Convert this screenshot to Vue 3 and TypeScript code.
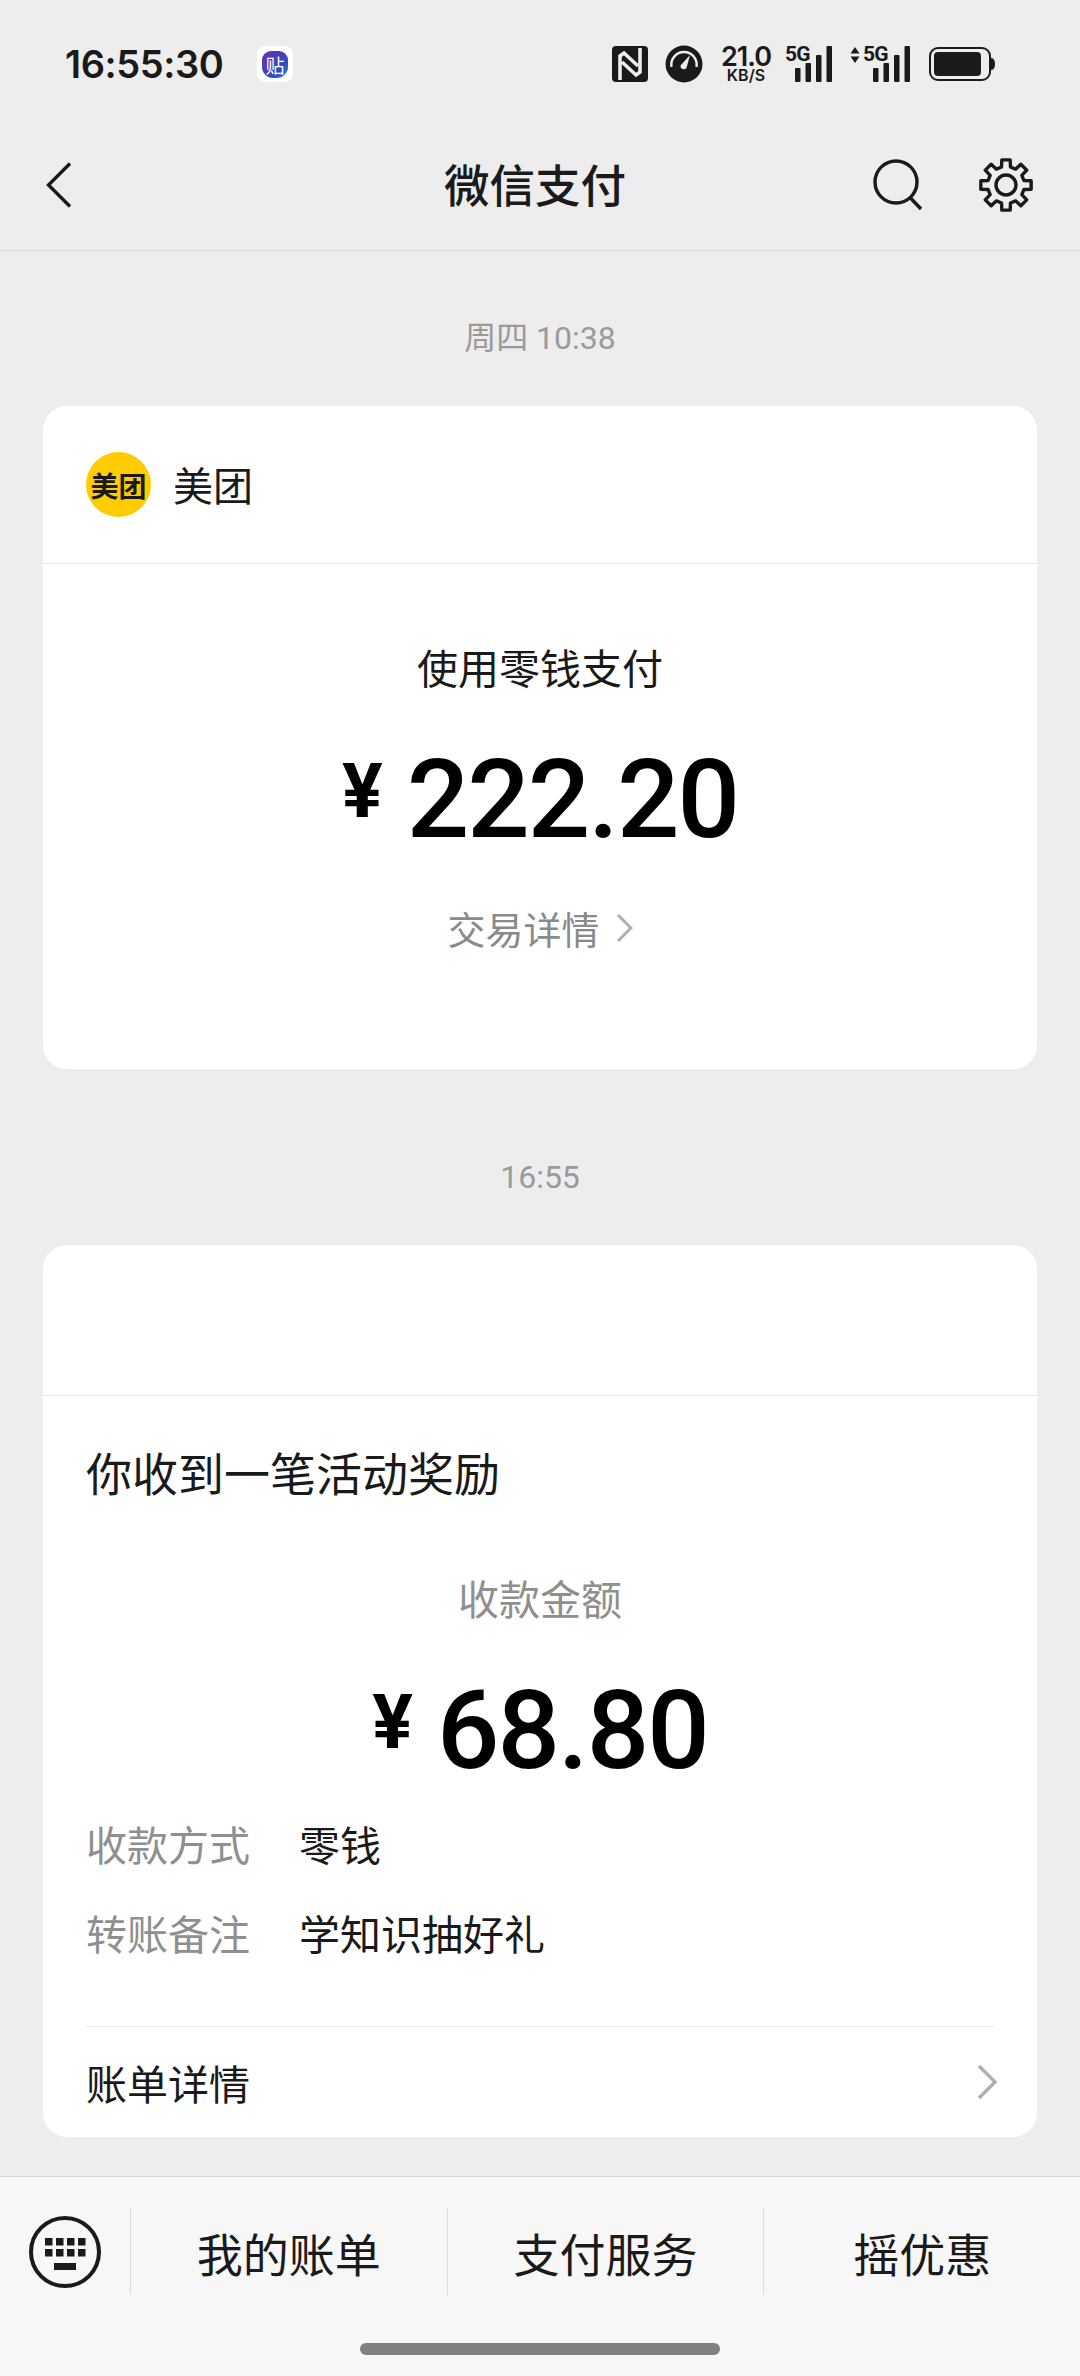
<script setup lang="ts">
// 8 tooth gear outline, in a 54x54 box
const gearPath = (() => {
  const pts: string[] = []
  const teeth = 8
  for (let i = 0; i < teeth; i++) {
    const a = (i / teeth) * Math.PI * 2 - Math.PI / 2
    const step = Math.PI / teeth
    const list: [number, number][] = [
      [a - step * 0.42, 25.5],
      [a + step * 0.42, 25.5],
      [a + step * 0.62, 18.5],
      [a + step * 1.38, 18.5],
    ]
    for (const [ang, r] of list) {
      pts.push(`${(27 + Math.cos(ang) * r).toFixed(2)} ${(27 + Math.sin(ang) * r).toFixed(2)}`)
    }
  }
  return 'M' + pts.join('L') + 'Z'
})()

const tabs = ['我的账单', '支付服务', '摇优惠']
const keyRows = [0, 1]
const keyCols = [0, 1, 2, 3]
const bars = [
  { x: 0, h: 14 },
  { x: 10.5, h: 19 },
  { x: 21, h: 27 },
  { x: 31.5, h: 36 },
]
</script>

<template>
  <div class="page">
    <div class="status">
      <span class="status__time">16:55:30</span>
      <div class="status__app"><span class="status__app-inner">贴</span></div>
      <div class="status__icons">
        <svg width="36" height="36" viewBox="0 0 36 36">
          <rect width="36" height="36" rx="4" fill="#1a1a1a" />
          <path d="M8 34V10l4-3 14 13M28 2v24l-4 3L10 16" fill="none" stroke="#ededed" stroke-width="3.600" />
        </svg>
        <svg class="status__gauge" width="38" height="38" viewBox="0 0 38 38">
          <circle cx="19" cy="19" r="18.5" fill="#1a1a1a" />
          <path d="M6.500 22A12.700 12.700 0 1 1 31.500 22" fill="none" stroke="#ededed" stroke-width="2.400" />
          <path d="M25 10l-3.500 13a3.400 3.400 0 0 1-6-2.600z" fill="#ededed" />
        </svg>
        <div class="status__speed">
          <span class="status__speed-num">21.0</span>
          <span class="status__speed-unit">KB/S</span>
        </div>
        <div class="status__signal">
          <span class="status__net">5G</span>
          <svg width="38" height="36" viewBox="0 0 38 36">
            <rect v-for="b in bars" :key="b.x" :x="b.x" :y="36 - b.h" width="5.500" :height="b.h" rx="1" fill="#1a1a1a" />
          </svg>
        </div>
        <div class="status__signal status__signal--data">
          <svg class="status__arrows" width="10" height="16" viewBox="0 0 10 16">
            <path d="M5 0l4.500 6.500h-9zM5 16L.5 9.500h9z" fill="#1a1a1a" />
          </svg>
          <span class="status__net">5G</span>
          <svg width="38" height="36" viewBox="0 0 38 36">
            <rect v-for="b in bars" :key="b.x" :x="b.x" :y="36 - b.h" width="5.500" :height="b.h" rx="1" fill="#1a1a1a" />
          </svg>
        </div>
        <svg width="66" height="34" viewBox="0 0 66 34">
          <rect x="1" y="1" width="60" height="32" rx="8" fill="none" stroke="#1a1a1a" stroke-width="2" />
          <rect x="5" y="5" width="47" height="24" rx="4" fill="#1a1a1a" />
          <path d="M62 11c3 0 4 3 4 6s-1 6-4 6z" fill="#1a1a1a" />
        </svg>
      </div>
    </div>

    <header class="nav">
      <svg class="nav__back" width="26" height="46" viewBox="0 0 26 46">
        <path d="M24 1.500 2.500 23 24 44.500" fill="none" stroke="#1a1a1a" stroke-width="3.400" />
      </svg>
      <h1 class="nav__title">微信支付</h1>
      <svg class="nav__search" width="50" height="52" viewBox="0 0 50 52">
        <circle cx="23" cy="23" r="21" fill="none" stroke="#1a1a1a" stroke-width="3.400" />
        <path d="M37 38.500 48 50" fill="none" stroke="#1a1a1a" stroke-width="3.400" />
      </svg>
      <svg class="nav__gear" width="54" height="54" viewBox="0 0 54 54">
        <path :d="gearPath" fill="none" stroke="#1a1a1a" stroke-width="3.400" stroke-linejoin="round" />
        <circle cx="27" cy="27" r="10" fill="none" stroke="#1a1a1a" stroke-width="3.400" />
      </svg>
    </header>

    <main class="feed">
      <p class="stamp stamp--first">周四 10:38</p>
      <section class="card">
        <div class="card__head">
          <div class="logo">美团</div>
          <span class="card__name">美团</span>
        </div>
        <div class="pay">
          <p class="pay__label">使用零钱支付</p>
          <div class="amount">
            <span class="amount__sign">¥</span>
            <span class="amount__num">222.20</span>
          </div>
          <div class="pay__link">
            <span>交易详情</span>
            <svg width="17" height="30" viewBox="0 0 17 30">
              <path d="M2 2l13 13L2 28" fill="none" stroke="#b0b0b0" stroke-width="3" />
            </svg>
          </div>
        </div>
      </section>

      <p class="stamp">16:55</p>
      <section class="card">
        <div class="card__head card__head--empty"></div>
        <div class="reward">
          <p class="reward__title">你收到一笔活动奖励</p>
          <p class="reward__label">收款金额</p>
          <div class="amount">
            <span class="amount__sign">¥</span>
            <span class="amount__num">68.80</span>
          </div>
          <div class="row row--first">
            <span class="row__key">收款方式</span>
            <span class="row__value">零钱</span>
          </div>
          <div class="row">
            <span class="row__key">转账备注</span>
            <span class="row__value">学知识抽好礼</span>
          </div>
          <div class="bill">
            <span>账单详情</span>
            <svg class="bill__arrow" width="20" height="36" viewBox="0 0 20 36">
              <path d="M2 2l16 16L2 34" fill="none" stroke="#b0b0b0" stroke-width="3.400" />
            </svg>
          </div>
        </div>
      </section>
    </main>

    <footer class="tabbar">
      <div class="tabbar__row">
        <div class="tabbar__key">
          <svg width="74" height="74" viewBox="0 0 74 74">
            <circle cx="37" cy="37" r="34" fill="none" stroke="#1a1a1a" stroke-width="4" />
            <template v-for="r in keyRows" :key="r">
              <rect v-for="c in keyCols" :key="c" :x="17 + c * 11" :y="23 + r * 11" width="7.500" height="7.500" fill="#1a1a1a" />
            </template>
            <rect x="26" y="48" width="22" height="7" fill="#1a1a1a" />
          </svg>
        </div>
        <div v-for="t in tabs" :key="t" class="tabbar__item">{{ t }}</div>
      </div>
      <div class="tabbar__home"></div>
    </footer>
  </div>
</template>

<style>
html,
body {
  margin: 0;
  background: #ededed;
}
</style>

<style scoped>
.page {
  display: flex;
  flex-direction: column;
  width: 1080px;
  height: 2376px;
  overflow: hidden;
  background: #ededed;
  color: #1a1a1a;
  font-family: "Noto Sans CJK SC", "Noto Sans", sans-serif;
}

p,
h1 {
  margin: 0;
}

.status {
  display: flex;
  align-items: center;
  height: 128px;
  margin-bottom: -8px;
  padding-left: 65px;
}

.status__time {
  width: 192px;
  color: #1a1a1a;
  font-family: Inter, Roboto, sans-serif;
  font-size: 38px;
  font-weight: 600;
  letter-spacing: -0.4px;
}

.status__app {
  display: flex;
  align-items: center;
  justify-content: center;
  width: 36px;
  height: 36px;
  border-radius: 8px;
  background: #fff;
}

.status__app-inner {
  display: flex;
  align-items: center;
  justify-content: center;
  width: 26px;
  height: 27px;
  border-radius: 9px 9px 11px 11px;
  background: linear-gradient(135deg, #6a2fb0, #2f4cc0 70%, #2a9ae0);
  color: #fff;
  font-size: 19px;
  line-height: 1;
}

.status__icons {
  display: flex;
  align-items: center;
  margin-left: 319px;
}

.status__gauge {
  margin-left: 17px;
}

.status__speed {
  display: flex;
  flex-direction: column;
  align-items: center;
  width: 52px;
  margin-left: 17px;
  font-family: Inter, Roboto, sans-serif;
  font-weight: 600;
}

.status__speed-num {
  height: 22px;
  font-size: 27px;
  line-height: 22px;
  letter-spacing: -1px;
}

.status__speed-unit {
  height: 15px;
  font-size: 16px;
  line-height: 15px;
}

.status__signal {
  display: flex;
  align-items: flex-start;
  justify-content: flex-end;
  position: relative;
  width: 48px;
  height: 36px;
  margin-left: 13px;
}

.status__signal--data {
  width: 61px;
  margin-left: 17px;
}

.status__net {
  position: absolute;
  top: -1px;
  left: 0;
  font-family: Roboto, sans-serif;
  font-size: 21px;
  font-weight: 700;
  line-height: 18px;
  letter-spacing: -0.8px;
}

.status__signal--data .status__net {
  left: 13px;
}

.status__arrows {
  position: absolute;
  top: 1px;
  left: 0;
}

.status__icons > svg:last-child {
  margin-left: 18px;
}

.nav {
  display: flex;
  align-items: center;
  box-sizing: border-box;
  height: 131px;
  padding: 0 47px 0 46px;
  border-bottom: 1px solid #dcdcdc;
}

.nav__title {
  flex: 1;
  margin-top: -4px;
  padding-left: 125px;
  text-align: center;
  font-size: 45.5px;
  font-weight: 500;
  line-height: 60px;
}

.nav__search {
  margin-right: 56px;
}

.feed {
  flex: 1;
  padding: 0 43px;
}

.stamp {
  height: 50px;
  padding-top: 83px;
  padding-bottom: 43px;
  text-align: center;
  color: #9a9a9a;
  font-family: Roboto, "Noto Sans CJK SC", sans-serif;
  font-size: 32px;
  line-height: 50px;
}

.stamp--first {
  padding-top: 62px;
}

.card {
  overflow: hidden;
  border-radius: 24px;
  background: #fff;
}

.card__head {
  display: flex;
  align-items: center;
  gap: 22px;
  height: 157px;
  padding: 0 43px;
  border-bottom: 1px solid #e6e6e6;
}

.card__head--empty {
  height: 150px;
}

.logo {
  display: flex;
  align-items: center;
  justify-content: center;
  width: 65px;
  height: 65px;
  border-radius: 50%;
  background: #ffcc00;
  color: #1a1a1a;
  font-size: 28px;
  font-weight: 700;
  line-height: 1;
  white-space: nowrap;
}

.card__name {
  margin-top: -2px;
  font-size: 40px;
  line-height: 60px;
}

.pay {
  display: flex;
  flex-direction: column;
  align-items: center;
  padding: 72px 0 111px;
}

.pay__label {
  font-size: 41px;
  line-height: 60px;
}

.amount {
  display: flex;
  justify-content: center;
  gap: 24px;
  height: 110px;
  margin-top: 49px;
  color: #000;
  font-family: Roboto, sans-serif;
  font-weight: 500;
  line-height: 110px;
}

.amount__sign {
  margin-top: 8px;
  font-size: 76px;
  font-weight: 700;
  line-height: 76px;
}

.amount__num {
  font-size: 110px;
  letter-spacing: -2px;
}

.pay__link {
  display: flex;
  align-items: center;
  gap: 16px;
  margin-top: 43px;
  color: #8a8a8a;
  font-size: 38px;
  line-height: 60px;
}

.reward {
  padding: 45px 43px 0;
}

.reward__title {
  font-size: 46px;
  line-height: 60px;
}

.reward__label {
  margin-top: 66px;
  text-align: center;
  color: #8f8f8f;
  font-size: 41px;
  line-height: 60px;
}

.row {
  display: flex;
  margin-top: 29px;
  font-size: 41px;
  line-height: 60px;
}

.row--first {
  margin-top: 27px;
}

.row__key {
  width: 213px;
  color: #8f8f8f;
}

.bill {
  display: flex;
  align-items: center;
  justify-content: space-between;
  height: 110px;
  margin-top: 64px;
  border-top: 1px solid #e6e6e6;
  font-size: 41px;
}

.bill__arrow {
  margin-right: -3px;
}

.tabbar {
  box-sizing: border-box;
  height: 200px;
  padding-top: 31px;
  border-top: 1px solid #d8d8d8;
  background: #f7f7f7;
}

.tabbar__row {
  display: flex;
  height: 87px;
}

.tabbar__key {
  display: flex;
  align-items: center;
  justify-content: center;
  flex: none;
  box-sizing: border-box;
  width: 130px;
}

.tabbar__item {
  flex: 1;
  display: flex;
  align-items: center;
  justify-content: center;
  border-left: 1px solid #dcdcdc;
  font-size: 46px;
}

.tabbar__home {
  width: 360px;
  height: 12px;
  margin: 48px auto 0;
  border-radius: 6px;
  background: #808080;
}
</style>
